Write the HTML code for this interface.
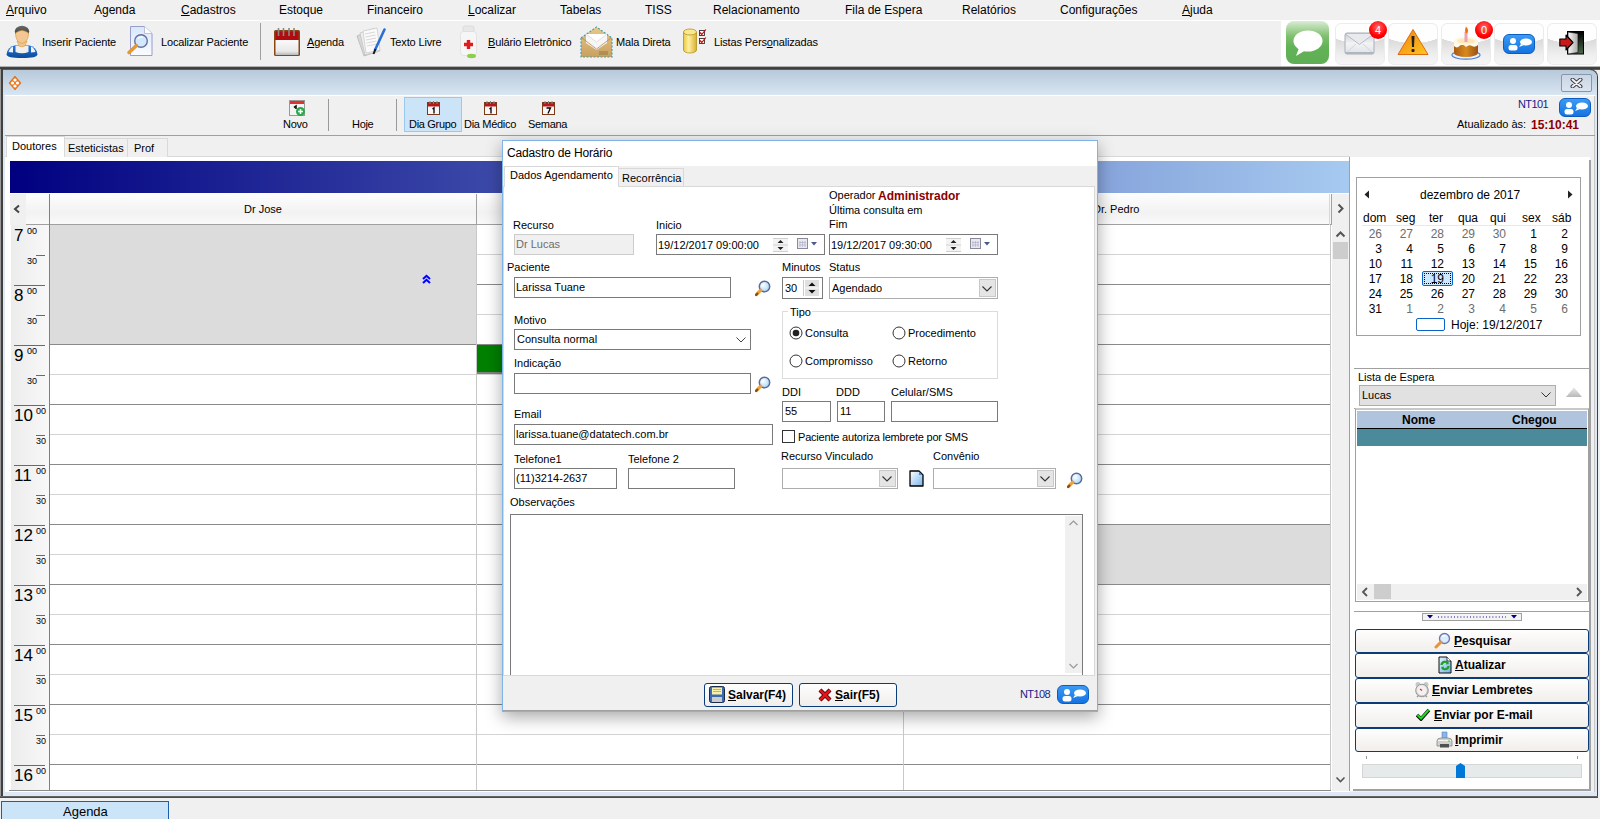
<!DOCTYPE html>
<html><head><meta charset="utf-8">
<style>
*{box-sizing:border-box;margin:0;padding:0}
html,body{width:1600px;height:819px;overflow:hidden;background:#f0f0f0;font-family:"Liberation Sans",sans-serif;font-size:11px;color:#000}
.a{position:absolute}
.t{position:absolute;white-space:nowrap;line-height:1}
.ul{text-decoration:underline;text-underline-offset:1px}
.box{position:absolute;background:#fff;border:1px solid #7a7a7a}
.lbl{position:absolute;white-space:nowrap;line-height:1;font-size:11px}
.b{font-weight:bold}
</style></head><body>

<!-- MENU BAR -->
<div class="a" style="left:0;top:20px;width:1600px;height:1px;background:#fff"></div>
<div style="position:absolute;left:0;top:4px;font-size:12px">
<span class="t" style="left:6px"><span class="ul">A</span>rquivo</span>
<span class="t" style="left:94px">Agenda</span>
<span class="t" style="left:181px"><span class="ul">C</span>adastros</span>
<span class="t" style="left:279px">Estoque</span>
<span class="t" style="left:367px">Financeiro</span>
<span class="t" style="left:468px"><span class="ul">L</span>ocalizar</span>
<span class="t" style="left:560px">Tabelas</span>
<span class="t" style="left:645px">TISS</span>
<span class="t" style="left:713px">Relacionamento</span>
<span class="t" style="left:845px">Fila de Espera</span>
<span class="t" style="left:962px">Relatórios</span>
<span class="t" style="left:1060px">Configurações</span>
<span class="t" style="left:1182px"><span class="ul">A</span>juda</span>
</div>

<!-- TOOLBAR -->
<div class="a" style="left:0;top:66px;width:1600px;height:4px;background:linear-gradient(#b0b0b0 0%,#b0b0b0 25%,#484848 25%,#3a3a3a 75%,#5a5a5a 75%)"></div>
<div style="position:absolute;left:0;top:37px;font-size:11px;letter-spacing:-0.15px">
<span class="t" style="left:42px">Inserir Paciente</span>
<span class="t" style="left:161px">Localizar Paciente</span>
<span class="t" style="left:307px"><span class="ul">A</span>genda</span>
<span class="t" style="left:390px">Texto Livre</span>
<span class="t" style="left:488px"><span class="ul">B</span>ulário Eletrônico</span>
<span class="t" style="left:616px">Mala Direta</span>
<span class="t" style="left:714px">Listas Pers<span class="ul">o</span>nalizadas</span>
</div>
<div class="a" style="left:260px;top:23px;width:1px;height:37px;background:#a0a0a0"></div>

<!-- toolbar icons -->
<svg class="a" style="left:5px;top:25px" width="34" height="34" viewBox="0 0 34 34">
 <defs><linearGradient id="blu" x1="0" y1="0" x2="0" y2="1"><stop offset="0" stop-color="#2a7ad8"/><stop offset="1" stop-color="#0a4a9a"/></linearGradient>
 <linearGradient id="hair" x1="0" y1="0" x2="0" y2="1"><stop offset="0" stop-color="#6a6a6a"/><stop offset="1" stop-color="#333"/></linearGradient></defs>
 <path d="M1.5 29.5 Q2.5 21.5 11 20 H23 Q31.5 21.5 32.5 29.5 Q32 33 17 33 Q2 33 1.5 29.5Z" fill="url(#blu)"/>
 <path d="M3.5 27 Q5 22.5 8 21.5 V27.5 Z M26 21.5 Q29 22.5 30.5 27 L26 27.5Z" fill="#f2f2f2"/>
 <path d="M10.5 20.5 H23.5 V27 Q17 29.5 10.5 27Z" fill="#efefef"/>
 <path d="M12 16 L14 21 Q17 22.5 20 21 L22 16Z" fill="#f0c48e" stroke="#d89a30" stroke-width=".6"/>
 <ellipse cx="17" cy="6.5" rx="7.2" ry="5.8" fill="url(#hair)"/>
 <path d="M10.5 8 Q10.5 17 17 18.5 Q23.5 17 23.5 8 Q20 5.5 17 5.5 Q14 5.5 10.5 8Z" fill="#f2c794" stroke="#d89a30" stroke-width=".6"/>
</svg>
<svg class="a" style="left:126px;top:25px" width="28" height="32" viewBox="0 0 28 32">
 <defs><linearGradient id="docg" x1="0" y1="0" x2="0" y2="1"><stop offset="0" stop-color="#d6e8fb"/><stop offset="1" stop-color="#fbfcff"/></linearGradient></defs>
 <path d="M4.5 1.5 H18.5 L26 8.5 V30.5 H4.5 Z" fill="url(#docg)" stroke="#9a9ccc"/>
 <path d="M18.5 1.5 V8.5 H26" fill="#fff" stroke="#b0b8c8" stroke-width=".8"/>
 <circle cx="15" cy="16" r="6.3" fill="#cfeafc" stroke="#6c6ca0" stroke-width="1.4"/>
 <path d="M12 13.5 Q14 11.5 17 12" stroke="#fff" stroke-width="1.3" fill="none"/>
 <path d="M10.5 20.5 L3 27.5" stroke="#e8962e" stroke-width="3.5" stroke-linecap="round"/>
</svg>
<svg class="a" style="left:273px;top:27px" width="28" height="30" viewBox="0 0 28 30">
 <defs><linearGradient id="pg" x1="0" y1="0" x2="0" y2="1"><stop offset="0" stop-color="#fafafa"/><stop offset=".75" stop-color="#e8e8e8"/><stop offset="1" stop-color="#b8b8b8"/></linearGradient></defs>
 <rect x="1" y="3" width="26" height="26" rx="1.5" fill="#8b4513"/>
 <rect x="2.5" y="4.5" width="23" height="9" fill="#b00c10"/>
 <rect x="2.5" y="13" width="23" height="15" fill="url(#pg)"/>
 <path d="M5.5 1v8M10.5 1v8M16 1v8M21 1v8" stroke="#888" stroke-width="1.6"/>
</svg>
<svg class="a" style="left:355px;top:26px" width="32" height="31" viewBox="0 0 32 31">
 <path d="M2 10 L16 4 L24 25 L9 30 Z" fill="#d8d8d8" stroke="#a8a8a8" stroke-width=".6"/>
 <path d="M5 7 L19 2.5 L25 25 L10 29 Z" fill="#efefef" stroke="#b8b8b8" stroke-width=".6"/>
 <path d="M8 5 L22 2 L25 24 L11 27 Z" fill="#fafafa" stroke="#c0c0c0" stroke-width=".6"/>
 <path d="M10 8l10-2M10.5 11l10-2M11 14l10-2M11.5 17l10-2M12 20l10-2" stroke="#c8c8c8" stroke-width=".7"/>
 <path d="M29.5 3.5 L20 24" stroke="#2a6fd6" stroke-width="2.6" stroke-linecap="round"/>
 <path d="M20.5 23 L18.5 28" stroke="#1a1a1a" stroke-width="2"/>
</svg>
<svg class="a" style="left:459px;top:25px" width="20" height="34" viewBox="0 0 20 34">
 <rect x="4" y="1" width="11" height="6" rx="2" fill="#e8e8e8" stroke="#d0d0d0" stroke-width=".6"/>
 <rect x="1.5" y="6.5" width="16" height="24" rx="3" fill="#f6f6f6" stroke="#d8d8d8" stroke-width=".6"/>
 <path d="M9.5 15v9M5 19.5h9" stroke="#e01b1b" stroke-width="3.4"/>
 <ellipse cx="12.5" cy="31" rx="4.5" ry="2.2" fill="#8cd04a"/>
</svg>
<svg class="a" style="left:580px;top:25px" width="33" height="33" viewBox="0 0 33 33">
 <defs><linearGradient id="env" x1="0" y1="0" x2="0" y2="1"><stop offset="0" stop-color="#e8c88a"/><stop offset="1" stop-color="#c9a060"/></linearGradient></defs>
 <path d="M1 13 L16.5 2 L32 13 V32 H1 Z" fill="url(#env)" stroke="#4aa0a8" stroke-width="1.2" stroke-dasharray="2 1.5"/>
 <path d="M6 9 H27 V18 L16.5 25 L6 18 Z" fill="#f6f6f6"/>
 <path d="M6 9 L16.5 17 L27 9" fill="#fff" stroke="#ccc" stroke-width=".6"/>
 <path d="M2 13 L16.5 24 L31 13" fill="none" stroke="#b08a50" stroke-width=".8"/>
 <path d="M19 27h9M19 29h9" stroke="#8a6a3a" stroke-width=".8"/>
</svg>
<svg class="a" style="left:682px;top:28px" width="26" height="27" viewBox="0 0 26 27">
 <defs><linearGradient id="cyl" x1="0" y1="0" x2="1" y2="0"><stop offset="0" stop-color="#e8c840"/><stop offset=".4" stop-color="#fff0a0"/><stop offset="1" stop-color="#d8b030"/></linearGradient></defs>
 <path d="M1.5 4 V22 A6.5 3 0 0 0 14.5 22 V4" fill="url(#cyl)" stroke="#b89020" stroke-width=".8"/>
 <ellipse cx="8" cy="4" rx="6.5" ry="3" fill="#f8e890" stroke="#b89020" stroke-width=".8"/>
 <rect x="17.5" y="2.5" width="5" height="5" fill="#fff" stroke="#333" stroke-width=".9"/>
 <rect x="17.5" y="10.5" width="5" height="5" fill="#fff" stroke="#333" stroke-width=".9"/>
 <path d="M18 4.5l1.8 2 4-5M18 12.5l1.8 2 4-5" stroke="#d00" stroke-width="1.2" fill="none"/>
</svg>

<!-- right toolbar icon area -->
<div class="a" style="left:1281px;top:21px;width:319px;height:45px;background:#fff"></div>
<div class="a" style="left:1335px;top:23px;width:50px;height:42px;border-radius:6px;background:radial-gradient(ellipse 80% 48% at 50% 0%,#fefefe 98%,rgba(255,255,255,0) 100%),linear-gradient(#f2f2f2,#d8d8d8 35%,#eeeeee 75%,#f6f6f6);border:1px solid #ececec"></div>
<div class="a" style="left:1388px;top:23px;width:50px;height:42px;border-radius:6px;background:radial-gradient(ellipse 80% 48% at 50% 0%,#fefefe 98%,rgba(255,255,255,0) 100%),linear-gradient(#f2f2f2,#d8d8d8 35%,#eeeeee 75%,#f6f6f6);border:1px solid #ececec"></div>
<div class="a" style="left:1441px;top:23px;width:50px;height:42px;border-radius:6px;background:radial-gradient(ellipse 80% 48% at 50% 0%,#fefefe 98%,rgba(255,255,255,0) 100%),linear-gradient(#f2f2f2,#d8d8d8 35%,#eeeeee 75%,#f6f6f6);border:1px solid #ececec"></div>
<div class="a" style="left:1494px;top:23px;width:50px;height:42px;border-radius:6px;background:radial-gradient(ellipse 80% 48% at 50% 0%,#fefefe 98%,rgba(255,255,255,0) 100%),linear-gradient(#f2f2f2,#d8d8d8 35%,#eeeeee 75%,#f6f6f6);border:1px solid #ececec"></div>
<div class="a" style="left:1547px;top:23px;width:50px;height:42px;border-radius:6px;background:radial-gradient(ellipse 80% 48% at 50% 0%,#fefefe 98%,rgba(255,255,255,0) 100%),linear-gradient(#f2f2f2,#d8d8d8 35%,#eeeeee 75%,#f6f6f6);border:1px solid #ececec"></div>
<!-- green msg -->
<div class="a" style="left:1286px;top:21px;width:43px;height:43px;border-radius:8px;background:linear-gradient(#d9ecd3 0%,#7fc06f 35%,#62b257 60%,#5fae55 100%)"></div>
<svg class="a" style="left:1292px;top:30px" width="32" height="27" viewBox="0 0 32 27">
 <ellipse cx="16" cy="11" rx="14.5" ry="10.5" fill="#fff"/>
 <path d="M7 18 L4 26 L14 20 Z" fill="#fff"/>
</svg>
<!-- envelope -->
<svg class="a" style="left:1344px;top:31px" width="32" height="25" viewBox="0 0 32 25">
 <defs><linearGradient id="evg" x1="0" y1="0" x2="0" y2="1"><stop offset="0" stop-color="#c8ccd4"/><stop offset=".5" stop-color="#f2f3f5"/><stop offset="1" stop-color="#dfe2e6"/></linearGradient></defs>
 <rect x="1" y="2" width="29" height="21" rx="2" fill="url(#evg)" stroke="#a8aeb8"/>
 <path d="M1.5 3 L15.5 13.5 L29.5 3" fill="#e8eaee" stroke="#b8bec8" stroke-width="1"/>
 <path d="M2 22 L12 13 M29 22 L19 13" stroke="#cfd3d9" stroke-width=".9"/>
 <rect x="1.5" y="21" width="28" height="2" fill="#b0b6c0"/>
</svg>
<div class="a" style="left:1369px;top:21px;width:18px;height:18px;border-radius:50%;background:radial-gradient(circle at 50% 35%,#ff6a6a,#f00 60%,#d00);color:#fff;font-size:11px;line-height:18px;text-align:center">4</div>
<!-- warning -->
<svg class="a" style="left:1397px;top:28px" width="32" height="28" viewBox="0 0 32 28">
 <defs><linearGradient id="wg" x1="0" y1="0" x2="1" y2="1"><stop offset="0" stop-color="#f08010"/><stop offset="1" stop-color="#ffc820"/></linearGradient></defs>
 <path d="M16 1.5 L31 26.5 H1 Z" fill="url(#wg)" stroke="#e06a10" stroke-linejoin="round"/>
 <path d="M14.5 8 H17.5 L17 19 H15Z" fill="#222"/>
 <rect x="14.5" y="21" width="3" height="3" rx="1" fill="#222"/>
</svg>
<!-- cake -->
<svg class="a" style="left:1450px;top:26px" width="32" height="34" viewBox="0 0 32 34">
 <defs><linearGradient id="ck" x1="0" y1="0" x2="1" y2="0"><stop offset="0" stop-color="#a85a10"/><stop offset=".5" stop-color="#d88a20"/><stop offset="1" stop-color="#9a5010"/></linearGradient></defs>
 <ellipse cx="16" cy="29" rx="14" ry="4.2" fill="#e8f0ff" stroke="#4a80d0" stroke-width="1.2"/>
 <path d="M4 15 V27 A12 4 0 0 0 28 27 V15 Z" fill="url(#ck)"/>
 <path d="M4 15 V20 Q7 23 10 19.5 Q13 17.5 16 21 Q19 18 22 20 Q25 22 28 19 V15Z" fill="#fffaf0"/>
 <ellipse cx="16" cy="15" rx="12" ry="4" fill="#fff6e0"/>
 <ellipse cx="16" cy="15" rx="9" ry="2.5" fill="#ffe8b8"/>
 <rect x="14.5" y="6" width="3" height="10" fill="#f0a0b0"/>
 <path d="M16 0.5 Q19.5 4 17 7.5 Q13.5 6.5 16 0.5Z" fill="#f07010"/>
</svg>
<div class="a" style="left:1475px;top:21px;width:18px;height:18px;border-radius:50%;background:radial-gradient(circle at 50% 35%,#ff6a6a,#f00 60%,#d00);color:#fff;font-size:11px;line-height:18px;text-align:center">0</div>
<!-- blue user chat -->
<div class="a" style="left:1503px;top:34px;width:32px;height:20px;border-radius:6px;background:linear-gradient(#3b9bf5,#1573e0);border:1px solid #0d5cc0"></div>
<svg class="a" style="left:1506px;top:36px" width="28" height="16" viewBox="0 0 28 16">
 <circle cx="7" cy="5" r="3" fill="#fff"/><rect x="2.5" y="9" width="9" height="5.5" rx="2.5" fill="#fff"/>
 <ellipse cx="20" cy="6" rx="6" ry="3.6" fill="#fff"/><path d="M15 8 L13 11 L18 9Z" fill="#fff"/>
</svg>
<!-- exit -->
<svg class="a" style="left:1559px;top:31px" width="26" height="25" viewBox="0 0 26 25">
 <defs><linearGradient id="dr" x1="0" y1="0" x2="1" y2="0"><stop offset="0" stop-color="#fafafa"/><stop offset="1" stop-color="#a8a8a8"/></linearGradient>
 <linearGradient id="dg" x1="0" y1="0" x2="0" y2="1"><stop offset="0" stop-color="#000"/><stop offset="1" stop-color="#4a6a4a"/></linearGradient></defs>
 <rect x="8.5" y="0.5" width="16" height="22.5" fill="url(#dg)" stroke="#000"/>
 <path d="M9 1 L19 2.5 V21.5 L9 23Z" fill="url(#dr)" stroke="#000" stroke-width=".6"/>
 <path d="M0.8 8 H7 V4 L14 11.5 L7 19 V15 H0.8 Z" fill="#c81818" stroke="#000" stroke-width="1.1" stroke-linejoin="round"/>
</svg>
<!-- MDI WINDOW -->
<div class="a" style="left:0;top:69px;width:1px;height:729px;background:#9a9a9a"></div>
<div class="a" style="left:1px;top:69px;width:2px;height:729px;background:#404040"></div>
<div class="a" style="left:1597px;top:76px;width:1px;height:722px;background:#404040"></div>
<div class="a" style="left:0;top:796px;width:1598px;height:2px;background:linear-gradient(#707070,#404040)"></div>
<div class="a" style="left:3px;top:70px;width:1594px;height:726px;background:#dde8f4;border-radius:0 7px 0 0"></div>
<div class="a" style="left:1590px;top:69px;width:8px;height:8px;border-top:2px solid #404040;border-right:1px solid #404040;border-radius:0 8px 0 0"></div>
<div class="a" style="left:3px;top:70px;width:1594px;height:25px;background:linear-gradient(#b8c9da,#d8e5f2);border-radius:0 7px 0 0"></div>
<div class="a" style="left:5px;top:95px;width:1590px;height:1px;background:#fff"></div>
<div class="a" style="left:5px;top:96px;width:1590px;height:696px;background:#f0f0f0;border-right:1px solid #c8c8c8"></div>
<!-- title icon -->
<svg class="a" style="left:8px;top:75px" width="14" height="16" viewBox="0 0 14 16">
 <path d="M7 1 L13 8 L7 15 L1 8 Z" fill="#f07a1a" stroke="#c05a10" stroke-width=".5"/>
 <circle cx="7" cy="5" r="1.6" fill="#fff"/><circle cx="4.5" cy="8" r="1.6" fill="#fff"/><circle cx="9.5" cy="8" r="1.6" fill="#fff"/><circle cx="7" cy="11" r="1.6" fill="#fff"/>
</svg>
<!-- close btn -->
<div class="a" style="left:1561px;top:74px;width:31px;height:18px;border:1px solid #8796aa;border-radius:2px;background:linear-gradient(#cad6e4,#dbe5f0)"></div>
<svg class="a" style="left:1570px;top:78px" width="13" height="10" viewBox="0 0 13 10">
 <path d="M2.5 1.5 L10.5 8.5 M10.5 1.5 L2.5 8.5" stroke="#3a3a4a" stroke-width="4" stroke-linecap="round"/>
 <path d="M2.5 1.5 L10.5 8.5 M10.5 1.5 L2.5 8.5" stroke="#f4f4f4" stroke-width="2" stroke-linecap="round"/>
</svg>

<!-- inner toolbar -->
<div class="a" style="left:5px;top:135px;width:1590px;height:1px;background:#a0a0a0"></div>
<div class="a" style="left:404px;top:97px;width:58px;height:35px;background:#cce4f7;border:1px solid #99c9ef"></div>
<div class="a" style="left:328px;top:99px;width:1px;height:32px;background:#9a9a9a"></div>
<div class="a" style="left:396px;top:99px;width:1px;height:32px;background:#9a9a9a"></div>
<svg class="a" style="left:289px;top:100px" width="17" height="17" viewBox="0 0 17 17">
 <rect x=".5" y=".5" width="15" height="15" fill="#f4f4f4" stroke="#999"/>
 <rect x="1" y="1" width="14" height="3" fill="#e03030"/>
 <path d="M5 7.5 L7 6 V9" stroke="#111" stroke-width="1.6" fill="none"/>
 <circle cx="11.5" cy="11.5" r="4.5" fill="#2aa84a"/><path d="M11.5 9v5M9 11.5h5" stroke="#fff" stroke-width="1.5"/>
</svg>
<svg class="a" style="left:427px;top:101px" width="13" height="14" viewBox="0 0 13 14">
 <rect x=".5" y="1.5" width="12" height="12" fill="#f6f6f6" stroke="#7a3a1a"/>
 <rect x="1" y="2" width="11" height="3.5" fill="#b8161a"/>
 <path d="M3 0v3M6.5 0v3M10 0v3" stroke="#888"/>
 <path d="M5.5 8 L7 6.8 V12.5" stroke="#000" stroke-width="1.3" fill="none"/>
</svg>
<svg class="a" style="left:484px;top:101px" width="13" height="14" viewBox="0 0 13 14">
 <rect x=".5" y="1.5" width="12" height="12" fill="#f6f6f6" stroke="#7a3a1a"/>
 <rect x="1" y="2" width="11" height="3.5" fill="#b8161a"/>
 <path d="M3 0v3M6.5 0v3M10 0v3" stroke="#888"/>
 <path d="M5.5 8 L7 6.8 V12.5" stroke="#000" stroke-width="1.3" fill="none"/>
</svg>
<svg class="a" style="left:542px;top:101px" width="13" height="14" viewBox="0 0 13 14">
 <rect x=".5" y="1.5" width="12" height="12" fill="#f6f6f6" stroke="#7a3a1a"/>
 <rect x="1" y="2" width="11" height="3.5" fill="#b8161a"/>
 <path d="M3 0v3M6.5 0v3M10 0v3" stroke="#888"/>
 <path d="M4.5 7 H8.5 L6 12.5" stroke="#000" stroke-width="1.3" fill="none"/>
</svg>
<div style="position:absolute;left:0;top:119px;font-size:11px;letter-spacing:-0.3px">
<span class="t" style="left:283px">Novo</span>
<span class="t" style="left:352px">Hoje</span>
<span class="t" style="left:409px">Dia Grupo</span>
<span class="t" style="left:464px">Dia Médico</span>
<span class="t" style="left:528px">Semana</span>
</div>
<span class="t" style="left:1518px;top:99px;font-size:11px;letter-spacing:-0.6px;color:#1a1a8c">NT101</span>
<div class="a" style="left:1559px;top:98px;width:32px;height:19px;border-radius:6px;background:linear-gradient(#3b9bf5,#1573e0);border:1px solid #0d5cc0"></div>
<svg class="a" style="left:1562px;top:100px" width="28" height="16" viewBox="0 0 28 16">
 <circle cx="7" cy="5" r="3" fill="#fff"/><rect x="2.5" y="9" width="9" height="5.5" rx="2.5" fill="#fff"/>
 <ellipse cx="20" cy="6" rx="6" ry="3.6" fill="#fff"/><path d="M15 8 L13 11 L18 9Z" fill="#fff"/>
</svg>
<span class="t" style="left:1457px;top:118.5px;font-size:11px">Atualizado às:</span>
<span class="t b" style="left:1531px;top:119px;font-size:12px;color:#8b0000">15:10:41</span>

<!-- tabs -->
<div class="a" style="left:5px;top:156px;width:1345px;height:1px;background:#d9d9d9"></div>
<div class="a" style="left:64px;top:138px;width:64px;height:19px;background:#f0f0f0;border:1px solid #d9d9d9;border-bottom:none"></div>
<div class="a" style="left:127px;top:138px;width:41px;height:19px;background:#f0f0f0;border:1px solid #d9d9d9;border-bottom:none"></div>
<div class="a" style="left:6px;top:136px;width:59px;height:22px;background:#fff;border:1px solid #d9d9d9;border-bottom:none"></div>
<div class="a" style="left:5px;top:157px;width:1345px;height:635px;background:#fff"></div>
<span class="t" style="left:12px;top:141px;font-size:11px">Doutores</span>
<span class="t" style="left:68px;top:143px;font-size:11px">Esteticistas</span>
<span class="t" style="left:134px;top:143px;font-size:11px">Prof</span>

<!-- blue header -->
<div class="a" style="left:10px;top:161px;width:1339px;height:32px;background:linear-gradient(90deg,#000080,#a6caf0)"></div>
<!-- GRID -->
<div class="a" style="left:10px;top:193px;width:1339px;height:598px;background:#fff"></div>
<div class="a" style="left:10px;top:194px;width:16px;height:31px;background:#f0f0f0"></div>
<div class="a" style="left:26px;top:194px;width:1306px;height:31px;background:linear-gradient(#fdfdfd,#f2f2f2 60%,#fafafa)"></div>
<div class="a" style="left:26px;top:224px;width:1306px;height:1px;background:#a0a0a0"></div>
<div class="a" style="left:1331px;top:194px;width:1px;height:31px;background:#a0a0a0"></div>
<div class="a" style="left:1329px;top:194px;width:1px;height:31px;background:#d8d8d8"></div>
<div class="a" style="left:49px;top:194px;width:1px;height:597px;background:#808080"></div>
<div class="a" style="left:476px;top:194px;width:1px;height:31px;background:#a0a0a0"></div>
<div class="a" style="left:903px;top:194px;width:1px;height:31px;background:#a0a0a0"></div>
<svg class="a" style="left:13px;top:204px" width="8" height="10" viewBox="0 0 8 10"><path d="M6 1.5 L2 5 L6 8.5" stroke="#444" stroke-width="2" fill="none"/></svg>
<span class="t" style="left:244px;top:204px;font-size:11px">Dr Jose</span>
<span class="t" style="left:665px;top:204px;font-size:11px">Dr Lucas</span>
<span class="t" style="left:1093px;top:204px;font-size:11px">Dr. Pedro</span>
<div class="a" style="left:11px;top:225px;width:38px;height:566px;background:linear-gradient(90deg,#ececec,#f8f8f8)"></div>
<div class="a" style="left:50px;top:254px;width:1281px;height:1px;background:#d4d4d4"></div>
<div class="a" style="left:50px;top:284px;width:1281px;height:1px;background:#8a8a8a"></div>
<div class="a" style="left:50px;top:314px;width:1281px;height:1px;background:#d4d4d4"></div>
<div class="a" style="left:50px;top:344px;width:1281px;height:1px;background:#8a8a8a"></div>
<div class="a" style="left:50px;top:374px;width:1281px;height:1px;background:#d4d4d4"></div>
<div class="a" style="left:50px;top:404px;width:1281px;height:1px;background:#8a8a8a"></div>
<div class="a" style="left:50px;top:434px;width:1281px;height:1px;background:#d4d4d4"></div>
<div class="a" style="left:50px;top:464px;width:1281px;height:1px;background:#8a8a8a"></div>
<div class="a" style="left:50px;top:494px;width:1281px;height:1px;background:#d4d4d4"></div>
<div class="a" style="left:50px;top:524px;width:1281px;height:1px;background:#8a8a8a"></div>
<div class="a" style="left:50px;top:554px;width:1281px;height:1px;background:#d4d4d4"></div>
<div class="a" style="left:50px;top:584px;width:1281px;height:1px;background:#8a8a8a"></div>
<div class="a" style="left:50px;top:614px;width:1281px;height:1px;background:#d4d4d4"></div>
<div class="a" style="left:50px;top:644px;width:1281px;height:1px;background:#8a8a8a"></div>
<div class="a" style="left:50px;top:674px;width:1281px;height:1px;background:#d4d4d4"></div>
<div class="a" style="left:50px;top:704px;width:1281px;height:1px;background:#8a8a8a"></div>
<div class="a" style="left:50px;top:734px;width:1281px;height:1px;background:#d4d4d4"></div>
<div class="a" style="left:50px;top:764px;width:1281px;height:1px;background:#8a8a8a"></div>
<div class="a" style="left:476px;top:225px;width:1px;height:566px;background:#c8c8c8"></div>
<div class="a" style="left:903px;top:225px;width:1px;height:566px;background:#c8c8c8"></div>
<div class="a" style="left:1330px;top:225px;width:1px;height:566px;background:#c8c8c8"></div>
<div class="a" style="left:9px;top:790px;width:1322px;height:1px;background:#8a8a8a"></div>
<div class="a" style="left:50px;top:225px;width:426px;height:119px;background:#dcdcdc"></div>
<div class="a" style="left:904px;top:525px;width:426px;height:59px;background:#dcdcdc"></div>
<div class="a" style="left:477px;top:345px;width:30px;height:27px;background:#008000"></div>
<div class="a" style="left:477px;top:372px;width:30px;height:2px;background:#808080"></div>
<svg class="a" style="left:422px;top:274px" width="9" height="10" viewBox="0 0 9 10"><path d="M1 5 L4.5 1.8 L8 5 M1 9 L4.5 5.8 L8 9" stroke="#0000ff" stroke-width="2" fill="none"/></svg>
<span class="t" style="left:14px;top:227px;font-size:17px">7</span>
<span class="t" style="left:27px;top:227px;font-size:9px">00</span>
<span class="t" style="left:27px;top:257px;font-size:9px">30</span>
<div class="a" style="left:36px;top:255px;width:9px;height:1px;background:#6a6a6a"></div>
<div class="a" style="left:14px;top:285px;width:31px;height:1px;background:#6a6a6a"></div>
<span class="t" style="left:14px;top:287px;font-size:17px">8</span>
<span class="t" style="left:27px;top:287px;font-size:9px">00</span>
<span class="t" style="left:27px;top:317px;font-size:9px">30</span>
<div class="a" style="left:36px;top:315px;width:9px;height:1px;background:#6a6a6a"></div>
<div class="a" style="left:14px;top:345px;width:31px;height:1px;background:#6a6a6a"></div>
<span class="t" style="left:14px;top:347px;font-size:17px">9</span>
<span class="t" style="left:27px;top:347px;font-size:9px">00</span>
<span class="t" style="left:27px;top:377px;font-size:9px">30</span>
<div class="a" style="left:36px;top:375px;width:9px;height:1px;background:#6a6a6a"></div>
<div class="a" style="left:14px;top:405px;width:31px;height:1px;background:#6a6a6a"></div>
<span class="t" style="left:14px;top:407px;font-size:17px">10</span>
<span class="t" style="left:36px;top:407px;font-size:9px">00</span>
<span class="t" style="left:36px;top:437px;font-size:9px">30</span>
<div class="a" style="left:36px;top:435px;width:9px;height:1px;background:#6a6a6a"></div>
<div class="a" style="left:14px;top:465px;width:31px;height:1px;background:#6a6a6a"></div>
<span class="t" style="left:14px;top:467px;font-size:17px">11</span>
<span class="t" style="left:36px;top:467px;font-size:9px">00</span>
<span class="t" style="left:36px;top:497px;font-size:9px">30</span>
<div class="a" style="left:36px;top:495px;width:9px;height:1px;background:#6a6a6a"></div>
<div class="a" style="left:14px;top:525px;width:31px;height:1px;background:#6a6a6a"></div>
<span class="t" style="left:14px;top:527px;font-size:17px">12</span>
<span class="t" style="left:36px;top:527px;font-size:9px">00</span>
<span class="t" style="left:36px;top:557px;font-size:9px">30</span>
<div class="a" style="left:36px;top:555px;width:9px;height:1px;background:#6a6a6a"></div>
<div class="a" style="left:14px;top:585px;width:31px;height:1px;background:#6a6a6a"></div>
<span class="t" style="left:14px;top:587px;font-size:17px">13</span>
<span class="t" style="left:36px;top:587px;font-size:9px">00</span>
<span class="t" style="left:36px;top:617px;font-size:9px">30</span>
<div class="a" style="left:36px;top:615px;width:9px;height:1px;background:#6a6a6a"></div>
<div class="a" style="left:14px;top:645px;width:31px;height:1px;background:#6a6a6a"></div>
<span class="t" style="left:14px;top:647px;font-size:17px">14</span>
<span class="t" style="left:36px;top:647px;font-size:9px">00</span>
<span class="t" style="left:36px;top:677px;font-size:9px">30</span>
<div class="a" style="left:36px;top:675px;width:9px;height:1px;background:#6a6a6a"></div>
<div class="a" style="left:14px;top:705px;width:31px;height:1px;background:#6a6a6a"></div>
<span class="t" style="left:14px;top:707px;font-size:17px">15</span>
<span class="t" style="left:36px;top:707px;font-size:9px">00</span>
<span class="t" style="left:36px;top:737px;font-size:9px">30</span>
<div class="a" style="left:36px;top:735px;width:9px;height:1px;background:#6a6a6a"></div>
<div class="a" style="left:14px;top:765px;width:31px;height:1px;background:#6a6a6a"></div>
<span class="t" style="left:14px;top:767px;font-size:17px">16</span>
<span class="t" style="left:36px;top:767px;font-size:9px">00</span>
<div class="a" style="left:1332px;top:194px;width:17px;height:597px;background:#f0f0f0"></div>
<svg class="a" style="left:1336px;top:203px" width="9" height="11" viewBox="0 0 9 11"><path d="M2.5 1.5 L6.5 5.5 L2.5 9.5" stroke="#555" stroke-width="2" fill="none"/></svg>
<svg class="a" style="left:1335px;top:230px" width="11" height="8" viewBox="0 0 11 8"><path d="M1.5 6.5 L5.5 2.5 L9.5 6.5" stroke="#555" stroke-width="2" fill="none"/></svg>
<div class="a" style="left:1333px;top:242px;width:15px;height:17px;background:#cdcdcd"></div>
<svg class="a" style="left:1335px;top:776px" width="11" height="8" viewBox="0 0 11 8"><path d="M1.5 1.5 L5.5 5.5 L9.5 1.5" stroke="#555" stroke-width="1.6" fill="none"/></svg>
<div class="a" style="left:1349px;top:157px;width:1px;height:634px;background:#a0a0a0"></div>
<!-- RIGHT PANEL -->
<div class="a" style="left:1350px;top:157px;width:240px;height:634px;background:#fff"></div>
<div class="a" style="left:1589px;top:160px;width:2px;height:631px;background:#a0a0a0"></div>
<div class="a" style="left:1353px;top:789px;width:238px;height:2px;background:#a0a0a0"></div>
<div class="a" style="left:1356px;top:177px;width:225px;height:159px;border:1px solid #a0a0a0;background:#fff"></div>
<svg class="a" style="left:1364px;top:190px" width="6" height="9" viewBox="0 0 6 9"><path d="M5 0.5 L0.5 4.5 L5 8.5Z" fill="#222"/></svg>
<svg class="a" style="left:1567px;top:190px" width="6" height="9" viewBox="0 0 6 9"><path d="M1 0.5 L5.5 4.5 L1 8.5Z" fill="#222"/></svg>
<span class="t" style="left:1420px;top:189px;font-size:12px">dezembro de 2017</span>
<span class="t" style="left:1363px;top:212px;font-size:12px">dom</span>
<span class="t" style="left:1396px;top:212px;font-size:12px">seg</span>
<span class="t" style="left:1429px;top:212px;font-size:12px">ter</span>
<span class="t" style="left:1458px;top:212px;font-size:12px">qua</span>
<span class="t" style="left:1490px;top:212px;font-size:12px">qui</span>
<span class="t" style="left:1522px;top:212px;font-size:12px">sex</span>
<span class="t" style="left:1552px;top:212px;font-size:12px">sáb</span>
<div class="a" style="left:1362px;top:225px;width:209px;height:1px;background:#e8e8e8"></div>
<div class="a" style="left:1422px;top:271px;width:31px;height:15px;border:1px solid #0a64c8;border-radius:2px;background:#cce8ff"></div>
<div class="a" style="left:1424px;top:273px;width:27px;height:11px;border:1px dotted #000"></div>
<span class="t" style="left:1342px;width:40px;text-align:right;top:228px;font-size:12px;color:#6d6d6d">26</span>
<span class="t" style="left:1373px;width:40px;text-align:right;top:228px;font-size:12px;color:#6d6d6d">27</span>
<span class="t" style="left:1404px;width:40px;text-align:right;top:228px;font-size:12px;color:#6d6d6d">28</span>
<span class="t" style="left:1435px;width:40px;text-align:right;top:228px;font-size:12px;color:#6d6d6d">29</span>
<span class="t" style="left:1466px;width:40px;text-align:right;top:228px;font-size:12px;color:#6d6d6d">30</span>
<span class="t" style="left:1497px;width:40px;text-align:right;top:228px;font-size:12px;color:#000">1</span>
<span class="t" style="left:1528px;width:40px;text-align:right;top:228px;font-size:12px;color:#000">2</span>
<span class="t" style="left:1342px;width:40px;text-align:right;top:243px;font-size:12px;color:#000">3</span>
<span class="t" style="left:1373px;width:40px;text-align:right;top:243px;font-size:12px;color:#000">4</span>
<span class="t" style="left:1404px;width:40px;text-align:right;top:243px;font-size:12px;color:#000">5</span>
<span class="t" style="left:1435px;width:40px;text-align:right;top:243px;font-size:12px;color:#000">6</span>
<span class="t" style="left:1466px;width:40px;text-align:right;top:243px;font-size:12px;color:#000">7</span>
<span class="t" style="left:1497px;width:40px;text-align:right;top:243px;font-size:12px;color:#000">8</span>
<span class="t" style="left:1528px;width:40px;text-align:right;top:243px;font-size:12px;color:#000">9</span>
<span class="t" style="left:1342px;width:40px;text-align:right;top:258px;font-size:12px;color:#000">10</span>
<span class="t" style="left:1373px;width:40px;text-align:right;top:258px;font-size:12px;color:#000">11</span>
<span class="t" style="left:1404px;width:40px;text-align:right;top:258px;font-size:12px;color:#000">12</span>
<span class="t" style="left:1435px;width:40px;text-align:right;top:258px;font-size:12px;color:#000">13</span>
<span class="t" style="left:1466px;width:40px;text-align:right;top:258px;font-size:12px;color:#000">14</span>
<span class="t" style="left:1497px;width:40px;text-align:right;top:258px;font-size:12px;color:#000">15</span>
<span class="t" style="left:1528px;width:40px;text-align:right;top:258px;font-size:12px;color:#000">16</span>
<span class="t" style="left:1342px;width:40px;text-align:right;top:273px;font-size:12px;color:#000">17</span>
<span class="t" style="left:1373px;width:40px;text-align:right;top:273px;font-size:12px;color:#000">18</span>
<span class="t" style="left:1404px;width:40px;text-align:right;top:273px;font-size:12px;color:#000">19</span>
<span class="t" style="left:1435px;width:40px;text-align:right;top:273px;font-size:12px;color:#000">20</span>
<span class="t" style="left:1466px;width:40px;text-align:right;top:273px;font-size:12px;color:#000">21</span>
<span class="t" style="left:1497px;width:40px;text-align:right;top:273px;font-size:12px;color:#000">22</span>
<span class="t" style="left:1528px;width:40px;text-align:right;top:273px;font-size:12px;color:#000">23</span>
<span class="t" style="left:1342px;width:40px;text-align:right;top:288px;font-size:12px;color:#000">24</span>
<span class="t" style="left:1373px;width:40px;text-align:right;top:288px;font-size:12px;color:#000">25</span>
<span class="t" style="left:1404px;width:40px;text-align:right;top:288px;font-size:12px;color:#000">26</span>
<span class="t" style="left:1435px;width:40px;text-align:right;top:288px;font-size:12px;color:#000">27</span>
<span class="t" style="left:1466px;width:40px;text-align:right;top:288px;font-size:12px;color:#000">28</span>
<span class="t" style="left:1497px;width:40px;text-align:right;top:288px;font-size:12px;color:#000">29</span>
<span class="t" style="left:1528px;width:40px;text-align:right;top:288px;font-size:12px;color:#000">30</span>
<span class="t" style="left:1342px;width:40px;text-align:right;top:303px;font-size:12px;color:#000">31</span>
<span class="t" style="left:1373px;width:40px;text-align:right;top:303px;font-size:12px;color:#6d6d6d">1</span>
<span class="t" style="left:1404px;width:40px;text-align:right;top:303px;font-size:12px;color:#6d6d6d">2</span>
<span class="t" style="left:1435px;width:40px;text-align:right;top:303px;font-size:12px;color:#6d6d6d">3</span>
<span class="t" style="left:1466px;width:40px;text-align:right;top:303px;font-size:12px;color:#6d6d6d">4</span>
<span class="t" style="left:1497px;width:40px;text-align:right;top:303px;font-size:12px;color:#6d6d6d">5</span>
<span class="t" style="left:1528px;width:40px;text-align:right;top:303px;font-size:12px;color:#6d6d6d">6</span>
<div class="a" style="left:1416px;top:318px;width:29px;height:13px;border:1px solid #0a64c8;border-radius:2px"></div>
<span class="t" style="left:1451px;top:319px;font-size:12px">Hoje: 19/12/2017</span>
<div class="a" style="left:1354px;top:368px;width:236px;height:1px;background:#a0a0a0"></div>
<span class="t" style="left:1358px;top:372px;font-size:11px">Lista de Espera</span>
<div class="a" style="left:1359px;top:385px;width:197px;height:21px;background:#e1e1e1;border:1px solid #adadad"></div>
<span class="t" style="left:1362px;top:390px;font-size:11px">Lucas</span>
<svg class="a" style="left:1541px;top:392px" width="10" height="6" viewBox="0 0 10 6"><path d="M0.5 0.5 L5 5 L9.5 0.5" stroke="#333" fill="none"/></svg>
<svg class="a" style="left:1565px;top:387px" width="18" height="11" viewBox="0 0 18 11"><defs><linearGradient id="tg" x1="0" y1="0" x2="0" y2="1"><stop offset="0" stop-color="#e8e8e8"/><stop offset="1" stop-color="#b8b8b8"/></linearGradient></defs><path d="M9 0.5 L17 10 H1Z" fill="url(#tg)"/></svg>
<div class="a" style="left:1354px;top:408px;width:236px;height:1px;background:#a0a0a0"></div>
<div class="a" style="left:1355px;top:408px;width:234px;height:194px;border:1px solid #a0a0a0;border-top:2px solid #c8c8c8;background:#fff"></div>
<div class="a" style="left:1357px;top:411px;width:230px;height:17px;background:#b0c4de"></div>
<div class="a" style="left:1357px;top:428px;width:230px;height:1px;background:#000"></div>
<div class="a" style="left:1357px;top:429px;width:230px;height:17px;background:#4a8a9a"></div>
<span class="t b" style="left:1402px;top:414px;font-size:12px">Nome</span>
<span class="t b" style="left:1512px;top:414px;font-size:12px">Chegou</span>
<div class="a" style="left:1357px;top:584px;width:230px;height:16px;background:#f0f0f0"></div>
<svg class="a" style="left:1361px;top:587px" width="8" height="10" viewBox="0 0 8 10"><path d="M6 1 L2 5 L6 9" stroke="#555" stroke-width="1.8" fill="none"/></svg>
<svg class="a" style="left:1575px;top:587px" width="8" height="10" viewBox="0 0 8 10"><path d="M2 1 L6 5 L2 9" stroke="#555" stroke-width="1.8" fill="none"/></svg>
<div class="a" style="left:1374px;top:584px;width:17px;height:15px;background:#cdcdcd"></div>
<div class="a" style="left:1354px;top:611px;width:236px;height:1px;background:#a0a0a0"></div>
<div class="a" style="left:1422px;top:613px;width:100px;height:8px;border:1px solid #a0a0a0;background:#f4f4f4"></div>
<svg class="a" style="left:1426px;top:614px" width="92" height="6" viewBox="0 0 92 6"><path d="M1 1 H7 L4 4.5Z M85 1 H91 L88 4.5Z" fill="#00008b"/><path d="M12 3 H80" stroke="#00008b" stroke-dasharray="1 2.2"/></svg>
<div class="a" style="left:1355px;top:629px;width:234px;height:24px;border:1px solid #0a3c7a;border-radius:3px;background:linear-gradient(#fefefe,#f1eeeb)"></div>
<span class="t b" style="left:1454px;top:635px;font-size:12px"><span class="ul">P</span>esquisar</span>
<div class="a" style="left:1355px;top:653px;width:234px;height:25px;border:1px solid #0a3c7a;border-radius:3px;background:linear-gradient(#fefefe,#f1eeeb)"></div>
<span class="t b" style="left:1455px;top:659px;font-size:12px"><span class="ul">A</span>tualizar</span>
<div class="a" style="left:1355px;top:678px;width:234px;height:25px;border:1px solid #0a3c7a;border-radius:3px;background:linear-gradient(#fefefe,#f1eeeb)"></div>
<span class="t b" style="left:1432px;top:684px;font-size:12px"><span class="ul">E</span>nviar Lembretes</span>
<div class="a" style="left:1355px;top:703px;width:234px;height:25px;border:1px solid #0a3c7a;border-radius:3px;background:linear-gradient(#fefefe,#f1eeeb)"></div>
<span class="t b" style="left:1434px;top:709px;font-size:12px"><span class="ul">E</span>nviar por E-mail</span>
<div class="a" style="left:1355px;top:728px;width:234px;height:24px;border:1px solid #0a3c7a;border-radius:3px;background:linear-gradient(#fefefe,#f1eeeb)"></div>
<span class="t b" style="left:1455px;top:734px;font-size:12px"><span class="ul">I</span>mprimir</span>
<svg class="a" style="left:1434px;top:632px" width="17" height="17" viewBox="0 0 17 17"><circle cx="10.5" cy="6.5" r="5" fill="#d8eefc" stroke="#7078b0" stroke-width="1.4"/><path d="M8 4.5 Q10 3 12.5 4" stroke="#fff" stroke-width="1.2" fill="none"/><path d="M7 10 L2 15" stroke="#e8923a" stroke-width="3" stroke-linecap="round"/></svg>
<svg class="a" style="left:1438px;top:656px" width="14" height="18" viewBox="0 0 14 18"><defs><linearGradient id="rf" x1="0" y1="0" x2="1" y2="1"><stop offset="0" stop-color="#e8f4ff"/><stop offset="1" stop-color="#6ab0e8"/></linearGradient></defs><path d="M1 1H9L13 5V17H1Z" fill="url(#rf)" stroke="#111"/><path d="M9 1V5H13" fill="#fff" stroke="#111" stroke-width=".8"/><path d="M3.5 9a3.5 3.5 0 0 1 6.5-1.5M10.5 10a3.5 3.5 0 0 1-6.5 1.5" stroke="#20a020" stroke-width="2.2" fill="none"/><path d="M9 5.5l2 2.5-3 .5Z M5 13.5l-2-2.5 3-.5Z" fill="#20a020"/></svg>
<svg class="a" style="left:1414px;top:681px" width="16" height="18" viewBox="0 0 16 18"><defs><radialGradient id="clk" cx=".4" cy=".35" r=".7"><stop offset="0" stop-color="#fff"/><stop offset="1" stop-color="#b8b8b8"/></radialGradient></defs><circle cx="4" cy="3.5" r="2.5" fill="#c8c8c8"/><circle cx="12" cy="3.5" r="2.5" fill="#c8c8c8"/><path d="M3 16l2-2M13 16l-2-2" stroke="#999" stroke-width="1.4"/><circle cx="8" cy="9.5" r="6.3" fill="url(#clk)" stroke="#999"/><circle cx="8" cy="9.5" r="4.8" fill="#f4f0f0"/><path d="M8 9.5 L6 8" stroke="#c33" stroke-width="1.2"/></svg>
<svg class="a" style="left:1416px;top:708px" width="14" height="13" viewBox="0 0 14 13"><path d="M1 7 L5 11 L13 2" stroke="#111" stroke-width="3.6" fill="none"/><path d="M1.5 7 L5 10.5 L12.5 2" stroke="#18e018" stroke-width="2" fill="none"/></svg>
<svg class="a" style="left:1436px;top:731px" width="17" height="18" viewBox="0 0 17 18"><path d="M6 1 H11 L11 7 H6Z" fill="#8ab4ec" stroke="#5a84c0" stroke-width=".6"/><path d="M1 10 Q1 7 5 7 H12 Q16 7 16 10 V15 H1Z" fill="#d0d0d0" stroke="#888" stroke-width=".8"/><path d="M2 9.5 H15" stroke="#f4f4f4"/><rect x="4" y="13" width="9" height="3.5" fill="#505050"/><circle cx="13" cy="10" r=".8" fill="#3c3"/></svg>
<div class="a" style="left:1366px;top:756px;width:1px;height:3px;background:#999"></div>
<div class="a" style="left:1577px;top:756px;width:1px;height:3px;background:#999"></div>
<div class="a" style="left:1362px;top:764px;width:220px;height:14px;background:#e7eaea;border:1px solid #d6d6d6"></div>
<svg class="a" style="left:1456px;top:763px" width="9" height="15" viewBox="0 0 9 15"><path d="M0 3 L4.5 0 L9 3 V15 H0Z" fill="#0078d7"/></svg>
<!-- DIALOG -->
<div class="a" style="left:502px;top:140px;width:596px;height:572px;background:#f0f0f0;border:1px solid #7fb4ea;box-shadow:0 5px 16px rgba(0,0,0,.35)"></div>
<div class="a" style="left:503px;top:141px;width:594px;height:25px;background:#fff"></div>
<span class="t" style="left:507px;top:146.8px;font-size:12px;letter-spacing:-0.15px">Cadastro de Horário</span>
<div class="a" style="left:618px;top:168px;width:66px;height:19px;background:#f0f0f0;border:1px solid #d9d9d9;border-bottom:none"></div>
<div class="a" style="left:503px;top:186px;width:592px;height:490px;background:#fff;border:1px solid #d9d9d9"></div>
<div class="a" style="left:504px;top:166px;width:115px;height:21px;background:#fff;border:1px solid #d9d9d9;border-bottom:none"></div>
<span class="t" style="left:510px;top:169.7px;font-size:11px;">Dados Agendamento</span>
<span class="t" style="left:622px;top:172.7px;font-size:11px;">Recorrência</span>
<span class="t" style="left:829px;top:189.7px;font-size:11px;">Operador</span>
<span class="t" style="left:878px;top:189.8px;font-size:12px;font-weight:bold;color:#8b0000">Administrador</span>
<span class="t" style="left:829px;top:204.7px;font-size:11px;">Última consulta em</span>
<span class="t" style="left:829px;top:218.7px;font-size:11px;">Fim</span>
<span class="t" style="left:513px;top:219.7px;font-size:11px;">Recurso</span>
<span class="t" style="left:656px;top:219.7px;font-size:11px;">Inicio</span>
<div class="a" style="left:514px;top:234px;width:120px;height:21px;background:#f0f0f0;border:1px solid #cccccc"></div>
<span class="t" style="left:516px;top:238.7px;font-size:11px;color:#6d6d6d">Dr Lucas</span>
<div class="a" style="left:656px;top:234px;width:169px;height:21px;background:#fff;border:1px solid #7a7a7a"></div>
<span class="t" style="left:658px;top:239.7px;font-size:11px;">19/12/2017 09:00:00</span>
<svg class="a" style="left:773px;top:238px" width="15" height="14" viewBox="0 0 15 14"><rect x="0" y="0" width="15" height="14" fill="#f4f4f4"/><path d="M0 7h15M0 0.5h15M0 13.5h15" stroke="#d0d0d0"/><path d="M4.5 5 L7.5 2 L10.5 5Z M4.5 9 L7.5 12 L10.5 9Z" fill="#222"/></svg>
<svg class="a" style="left:797px;top:238px" width="21" height="12" viewBox="0 0 21 12"><rect x="0.5" y="0.5" width="10" height="10" fill="#e8e8f0" stroke="#8a8a9a"/><path d="M3 3v6M5.5 3v6M8 3v6M2 4.5h7M2 7h7" stroke="#b0b0c8" stroke-width=".7"/><path d="M14 4 H20 L17 7.5Z" fill="#4a5a8a"/></svg>
<div class="a" style="left:829px;top:234px;width:169px;height:21px;background:#fff;border:1px solid #7a7a7a"></div>
<span class="t" style="left:831px;top:239.7px;font-size:11px;">19/12/2017 09:30:00</span>
<svg class="a" style="left:946px;top:238px" width="15" height="14" viewBox="0 0 15 14"><rect x="0" y="0" width="15" height="14" fill="#f4f4f4"/><path d="M0 7h15M0 0.5h15M0 13.5h15" stroke="#d0d0d0"/><path d="M4.5 5 L7.5 2 L10.5 5Z M4.5 9 L7.5 12 L10.5 9Z" fill="#222"/></svg>
<svg class="a" style="left:970px;top:238px" width="21" height="12" viewBox="0 0 21 12"><rect x="0.5" y="0.5" width="10" height="10" fill="#e8e8f0" stroke="#8a8a9a"/><path d="M3 3v6M5.5 3v6M8 3v6M2 4.5h7M2 7h7" stroke="#b0b0c8" stroke-width=".7"/><path d="M14 4 H20 L17 7.5Z" fill="#4a5a8a"/></svg>
<span class="t" style="left:507px;top:261.7px;font-size:11px;">Paciente</span>
<span class="t" style="left:782px;top:261.7px;font-size:11px;">Minutos</span>
<span class="t" style="left:829px;top:261.7px;font-size:11px;">Status</span>
<div class="a" style="left:514px;top:277px;width:217px;height:21px;background:#fff;border:1px solid #7a7a7a"></div>
<span class="t" style="left:516px;top:281.7px;font-size:11px;">Larissa Tuane</span>
<svg class="a" style="left:754px;top:280px" width="17" height="17" viewBox="0 0 17 17"><defs><radialGradient id="lg754" cx=".35" cy=".35" r=".7"><stop offset="0" stop-color="#ffffff"/><stop offset="1" stop-color="#a8d8f8"/></radialGradient></defs><circle cx="10.5" cy="6.5" r="5.2" fill="url(#lg754)" stroke="#5c6c98" stroke-width="1.5"/><path d="M6.8 10.2 L2.5 14.5" stroke="#f0a040" stroke-width="3.2" stroke-linecap="round"/><path d="M3.5 13.5 L2 15" stroke="#705020" stroke-width="2" stroke-linecap="round"/></svg>
<div class="a" style="left:782px;top:277px;width:41px;height:22px;background:#fff;border:1px solid #7a7a7a"></div>
<span class="t" style="left:785px;top:282.7px;font-size:11px;">30</span>
<div class="a" style="left:803px;top:280px;width:1px;height:16px;background:#c8c8c8"></div>
<svg class="a" style="left:805px;top:280px" width="14" height="16" viewBox="0 0 14 16"><rect width="14" height="7.5" fill="#e0e0e0"/><rect y="8.5" width="14" height="7.5" fill="#e0e0e0"/><path d="M3.5 6 L7 2.5 L10.5 6Z M3.5 10 L7 13.5 L10.5 10Z" fill="#111"/></svg>
<div class="a" style="left:829px;top:277px;width:169px;height:22px;background:#fff;border:1px solid #adadad"></div>
<span class="t" style="left:832px;top:282.7px;font-size:11px;">Agendado</span>
<div class="a" style="left:979px;top:279px;width:17px;height:18px;background:#e5e5e5;border:1px solid #c8c8c8"></div>
<svg class="a" style="left:982px;top:286px" width="10" height="6" viewBox="0 0 10 6"><path d="M0.5 0.5 L5 5 L9.5 0.5" stroke="#333" stroke-width="1.1" fill="none"/></svg>
<span class="t" style="left:514px;top:314.7px;font-size:11px;">Motivo</span>
<div class="a" style="left:514px;top:329px;width:237px;height:21px;background:#fff;border:1px solid #7a7a7a"></div>
<span class="t" style="left:517px;top:333.7px;font-size:11px;">Consulta normal</span>
<svg class="a" style="left:736px;top:337px" width="10" height="6" viewBox="0 0 10 6"><path d="M0.5 0.5 L5 5 L9.5 0.5" stroke="#444" fill="none"/></svg>
<div class="a" style="left:782px;top:311px;width:216px;height:68px;border:1px solid #dcdcdc"></div>
<div class="a" style="left:788px;top:306px;width:24px;height:10px;background:#fff"></div>
<span class="t" style="left:790px;top:306.7px;font-size:11px;">Tipo</span>
<svg class="a" style="left:789px;top:326px" width="14" height="14" viewBox="0 0 14 14"><circle cx="7" cy="7" r="6" fill="#fff" stroke="#333"/><circle cx="7" cy="7" r="3.3" fill="#222"/></svg>
<span class="t" style="left:805px;top:327.7px;font-size:11px;">Consulta</span>
<svg class="a" style="left:892px;top:326px" width="14" height="14" viewBox="0 0 14 14"><circle cx="7" cy="7" r="6" fill="#fff" stroke="#333"/></svg>
<span class="t" style="left:908px;top:327.7px;font-size:11px;">Procedimento</span>
<svg class="a" style="left:789px;top:354px" width="14" height="14" viewBox="0 0 14 14"><circle cx="7" cy="7" r="6" fill="#fff" stroke="#333"/></svg>
<span class="t" style="left:805px;top:355.7px;font-size:11px;">Compromisso</span>
<svg class="a" style="left:892px;top:354px" width="14" height="14" viewBox="0 0 14 14"><circle cx="7" cy="7" r="6" fill="#fff" stroke="#333"/></svg>
<span class="t" style="left:908px;top:355.7px;font-size:11px;">Retorno</span>
<span class="t" style="left:514px;top:357.7px;font-size:11px;">Indicação</span>
<div class="a" style="left:514px;top:373px;width:237px;height:21px;background:#fff;border:1px solid #7a7a7a"></div>
<svg class="a" style="left:754px;top:376px" width="17" height="17" viewBox="0 0 17 17"><defs><radialGradient id="lg754" cx=".35" cy=".35" r=".7"><stop offset="0" stop-color="#ffffff"/><stop offset="1" stop-color="#a8d8f8"/></radialGradient></defs><circle cx="10.5" cy="6.5" r="5.2" fill="url(#lg754)" stroke="#5c6c98" stroke-width="1.5"/><path d="M6.8 10.2 L2.5 14.5" stroke="#f0a040" stroke-width="3.2" stroke-linecap="round"/><path d="M3.5 13.5 L2 15" stroke="#705020" stroke-width="2" stroke-linecap="round"/></svg>
<span class="t" style="left:782px;top:386.7px;font-size:11px;">DDI</span>
<span class="t" style="left:836px;top:386.7px;font-size:11px;">DDD</span>
<span class="t" style="left:891px;top:386.7px;font-size:11px;">Celular/SMS</span>
<div class="a" style="left:782px;top:401px;width:49px;height:21px;background:#fff;border:1px solid #7a7a7a"></div>
<span class="t" style="left:785px;top:405.7px;font-size:11px;">55</span>
<div class="a" style="left:837px;top:401px;width:48px;height:21px;background:#fff;border:1px solid #7a7a7a"></div>
<span class="t" style="left:840px;top:405.7px;font-size:11px;">11</span>
<div class="a" style="left:891px;top:401px;width:107px;height:21px;background:#fff;border:1px solid #7a7a7a"></div>
<span class="t" style="left:514px;top:408.7px;font-size:11px;">Email</span>
<div class="a" style="left:514px;top:424px;width:259px;height:21px;background:#fff;border:1px solid #7a7a7a"></div>
<span class="t" style="left:516px;top:428.7px;font-size:11px;">larissa.tuane@datatech.com.br</span>
<div class="a" style="left:782px;top:430px;width:13px;height:13px;border:1px solid #333;background:#fff"></div>
<span class="t" style="left:798px;top:431.7px;font-size:11px;letter-spacing:-0.2px">Paciente autoriza lembrete por SMS</span>
<span class="t" style="left:514px;top:453.7px;font-size:11px;">Telefone1</span>
<span class="t" style="left:628px;top:453.7px;font-size:11px;">Telefone 2</span>
<span class="t" style="left:781px;top:450.7px;font-size:11px;">Recurso Vinculado</span>
<span class="t" style="left:933px;top:450.7px;font-size:11px;">Convênio</span>
<div class="a" style="left:514px;top:468px;width:103px;height:21px;background:#fff;border:1px solid #7a7a7a"></div>
<span class="t" style="left:516px;top:472.7px;font-size:11px;">(11)3214-2637</span>
<div class="a" style="left:628px;top:468px;width:107px;height:21px;background:#fff;border:1px solid #7a7a7a"></div>
<div class="a" style="left:782px;top:468px;width:116px;height:21px;background:#fff;border:1px solid #adadad"></div>
<div class="a" style="left:879px;top:470px;width:17px;height:17px;background:#e5e5e5;border:1px solid #c8c8c8"></div>
<svg class="a" style="left:882px;top:476px" width="10" height="6" viewBox="0 0 10 6"><path d="M0.5 0.5 L5 5 L9.5 0.5" stroke="#333" stroke-width="1.1" fill="none"/></svg>
<svg class="a" style="left:909px;top:470px" width="15" height="17" viewBox="0 0 15 17"><defs><linearGradient id="dcg" x1="0" y1="0" x2="1" y2="1"><stop offset="0" stop-color="#fff"/><stop offset="1" stop-color="#78b4ec"/></linearGradient></defs><path d="M1 1H10L14 5V16H1Z" fill="url(#dcg)" stroke="#000" stroke-width="1.3" stroke-linejoin="round"/><path d="M10 1.5 L13.5 5 H10Z" fill="#3a8ae0"/></svg>
<div class="a" style="left:933px;top:468px;width:123px;height:21px;background:#fff;border:1px solid #adadad"></div>
<div class="a" style="left:1037px;top:470px;width:17px;height:17px;background:#e5e5e5;border:1px solid #c8c8c8"></div>
<svg class="a" style="left:1040px;top:476px" width="10" height="6" viewBox="0 0 10 6"><path d="M0.5 0.5 L5 5 L9.5 0.5" stroke="#333" stroke-width="1.1" fill="none"/></svg>
<svg class="a" style="left:1066px;top:472px" width="17" height="17" viewBox="0 0 17 17"><defs><radialGradient id="lg1066" cx=".35" cy=".35" r=".7"><stop offset="0" stop-color="#ffffff"/><stop offset="1" stop-color="#a8d8f8"/></radialGradient></defs><circle cx="10.5" cy="6.5" r="5.2" fill="url(#lg1066)" stroke="#5c6c98" stroke-width="1.5"/><path d="M6.8 10.2 L2.5 14.5" stroke="#f0a040" stroke-width="3.2" stroke-linecap="round"/><path d="M3.5 13.5 L2 15" stroke="#705020" stroke-width="2" stroke-linecap="round"/></svg>
<span class="t" style="left:510px;top:496.7px;font-size:11px;">Observações</span>
<div class="a" style="left:510px;top:514px;width:573px;height:161px;background:#fff;border:1px solid #7a7a7a;border-bottom:none"></div>
<div class="a" style="left:1065px;top:516px;width:17px;height:157px;background:#f0f0f0"></div>
<svg class="a" style="left:1069px;top:520px" width="9" height="6" viewBox="0 0 9 6"><path d="M0.5 5 L4.5 1 L8.5 5" stroke="#999" stroke-width="1.2" fill="none"/></svg>
<svg class="a" style="left:1069px;top:663px" width="9" height="6" viewBox="0 0 9 6"><path d="M0.5 1 L4.5 5 L8.5 1" stroke="#999" stroke-width="1.2" fill="none"/></svg>
<div class="a" style="left:503px;top:710px;width:594px;height:1px;background:#a0a0a0"></div>
<div class="a" style="left:704px;top:683px;width:89px;height:24px;border:1px solid #0a3c7a;border-radius:3px;background:linear-gradient(#fefefe,#f1eeeb)"></div>
<div class="a" style="left:799px;top:683px;width:98px;height:24px;border:1px solid #0a3c7a;border-radius:3px;background:linear-gradient(#fefefe,#f1eeeb)"></div>
<span class="t" style="left:728px;top:688.8px;font-size:12px;font-weight:bold"><span class="ul">S</span>alvar(F4)</span>
<span class="t" style="left:835px;top:688.8px;font-size:12px;font-weight:bold"><span class="ul">S</span>air(F5)</span>
<svg class="a" style="left:709px;top:686px" width="16" height="17" viewBox="0 0 16 17"><rect x="0.5" y="0.5" width="15" height="16" rx="2" fill="#3a6ab0" stroke="#1a2a4a"/><rect x="3" y="1.5" width="10" height="7" fill="#f8f0a8"/><path d="M4 3.5h8M4 5.5h8" stroke="#888" stroke-width=".6"/><rect x="3" y="11" width="10" height="5" fill="#ccc"/></svg>
<svg class="a" style="left:818px;top:688px" width="14" height="14" viewBox="0 0 14 14"><path d="M2 2 L12 12 M12 2 L2 12" stroke="#300" stroke-width="4.2"/><path d="M2 2 L12 12 M12 2 L2 12" stroke="#e8121a" stroke-width="2.6"/></svg>
<span class="t" style="left:1020px;top:689px;font-size:11px;letter-spacing:-0.6px;color:#1a1a8c">NT108</span>
<div class="a" style="left:1057px;top:685px;width:32px;height:19px;border-radius:6px;background:linear-gradient(#3b9bf5,#1573e0);border:1px solid #0d5cc0"></div>
<svg class="a" style="left:1060px;top:687px" width="28" height="16" viewBox="0 0 28 16"><circle cx="7" cy="5" r="3" fill="#fff"/><rect x="2.5" y="9" width="9" height="5.5" rx="2.5" fill="#fff"/><ellipse cx="20" cy="6" rx="6" ry="3.6" fill="#fff"/><path d="M15 8 L13 11 L18 9Z" fill="#fff"/></svg>
<!-- STATUS BAR -->
<div class="a" style="left:0;top:798px;width:1600px;height:21px;background:#f0f0f0"></div>
<div class="a" style="left:1px;top:801px;width:168px;height:18px;background:#cce4f7;border:1px solid #1a5fa8;border-bottom:none"></div>
<span class="t" style="left:63px;top:805px;font-size:13px">Agenda</span>
</body></html>
